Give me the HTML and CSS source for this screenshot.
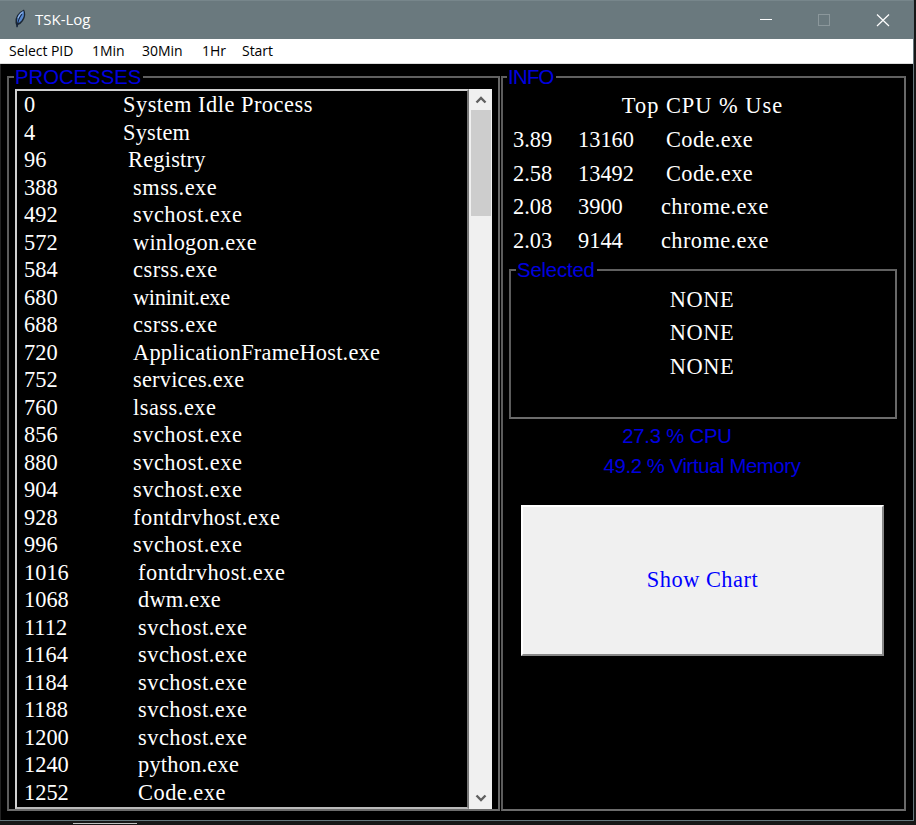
FILE: index.html
```html
<!DOCTYPE html>
<html lang="en">
<head>
<meta charset="utf-8">
<title>TSK-Log</title>
<link rel="stylesheet" href="styles.css">
</head>
<body>
<div class="window">
  <header class="titlebar">
    <svg class="feather" width="14" height="20" viewBox="0 0 14 20">
      <path d="M4 19 L2.500 14 Q1.500 5 11 .5 Q14 6 10 12 Q8 15 5 16 Z" fill="#1b2632"/>
      <path d="M4 13 Q3.500 5 10.500 1.800 Q12 7 8.500 11.500 Q6.500 14 4.500 14 Z" fill="#5687cf"/>
      <path d="M4 18 Q5 10 9 5" fill="none" stroke="#14243e" stroke-width="1.100"/>
      <path d="M5 9 Q6.500 5 9.800 3" fill="none" stroke="#a8c4ec" stroke-width="1"/>
    </svg>
    <h1 class="title">TSK-Log</h1>
    <svg class="controls" width="130" height="14" viewBox="0 0 130 14" fill="none">
      <path d="M0 6.500H12" stroke="#fff"/>
      <rect x="58.500" y="1.500" width="11" height="11" stroke="#8b979b"/>
      <path d="M117 1.500L129 13M129 1.500L117 13" stroke="#fff" stroke-width="1.200"/>
    </svg>
  </header>
  <nav class="menubar">
    <span class="m1">Select PID</span><span class="m2">1Min</span><span class="m3">30Min</span><span class="m4">1Hr</span><span>Start</span>
  </nav>
  <main class="content">
    <fieldset class="group processes">
      <legend>PROCESSES</legend>
      <div class="listbox">
        <ul class="list">
          <li><span>0</span><span>System Idle Process</span></li>
          <li class="snug"><span>4</span><span>System</span></li>
          <li class="n2 snug"><span>96</span><span>Registry</span></li>
          <li class="n3"><span>388</span><span>smss.exe</span></li>
          <li class="n3"><span>492</span><span>svchost.exe</span></li>
          <li class="n3 snug"><span>572</span><span>winlogon.exe</span></li>
          <li class="n3"><span>584</span><span>csrss.exe</span></li>
          <li class="n3 tight"><span>680</span><span>wininit.exe</span></li>
          <li class="n3"><span>688</span><span>csrss.exe</span></li>
          <li class="n3 snug"><span>720</span><span>ApplicationFrameHost.exe</span></li>
          <li class="n3 snug"><span>752</span><span>services.exe</span></li>
          <li class="n3"><span>760</span><span>lsass.exe</span></li>
          <li class="n3"><span>856</span><span>svchost.exe</span></li>
          <li class="n3"><span>880</span><span>svchost.exe</span></li>
          <li class="n3"><span>904</span><span>svchost.exe</span></li>
          <li class="n3"><span>928</span><span>fontdrvhost.exe</span></li>
          <li class="n3"><span>996</span><span>svchost.exe</span></li>
          <li class="n4"><span>1016</span><span>fontdrvhost.exe</span></li>
          <li class="n4 snug"><span>1068</span><span>dwm.exe</span></li>
          <li class="n4"><span>1112</span><span>svchost.exe</span></li>
          <li class="n4"><span>1164</span><span>svchost.exe</span></li>
          <li class="n4"><span>1184</span><span>svchost.exe</span></li>
          <li class="n4"><span>1188</span><span>svchost.exe</span></li>
          <li class="n4"><span>1200</span><span>svchost.exe</span></li>
          <li class="n4 snug"><span>1240</span><span>python.exe</span></li>
          <li class="n4"><span>1252</span><span>Code.exe</span></li>
        </ul>
        <div class="scrollbar">
          <svg class="arrow" width="12" height="21" viewBox="0 0 12 21"><path d="M1.500 13.500L6 9L10.500 13.500" fill="none" stroke="#606060" stroke-width="2.400"/></svg>
          <div class="thumb"></div>
          <svg class="arrow down" width="12" height="21" viewBox="0 0 12 21"><path d="M1.500 7.500L6 12L10.500 7.500" fill="none" stroke="#606060" stroke-width="2.400"/></svg>
        </div>
      </div>
    </fieldset>
    <fieldset class="group info">
      <legend>INFO</legend>
      <h2 class="heading">Top CPU % Use</h2>
      <div class="top"><span>3.89</span><span>13160</span><span class="wide">Code.exe</span></div>
      <div class="top"><span>2.58</span><span>13492</span><span class="wide">Code.exe</span></div>
      <div class="top"><span>2.08</span><span>3900</span><span>chrome.exe</span></div>
      <div class="top"><span>2.03</span><span>9144</span><span>chrome.exe</span></div>
      <fieldset class="group selected">
        <legend>Selected</legend>
        <p>NONE</p>
        <p>NONE</p>
        <p>NONE</p>
      </fieldset>
      <p class="stat cpu">27.3 % CPU</p>
      <p class="stat mem">49.2 % Virtual Memory</p>
      <button class="chart">Show Chart</button>
    </fieldset>
  </main>
</div>
<div class="edge"></div>
</body>
</html>
```
FILE: styles.css
```css
* { box-sizing: border-box; }
body {
  margin: 0;
  width: 916px;
  height: 825px;
  overflow: hidden;
  background: #171717;
}
.window {
  width: 914px;
  height: 821px;
  display: flex;
  flex-direction: column;
  background: #000;
  border-right: 1px solid #66777c;
  border-bottom: 1px solid #66777c;
}
.titlebar {
  height: 39px;
  flex: none;
  display: flex;
  align-items: center;
  padding: 0 23px 2px 13px;
  background: #6a797e;
  border-top: 1px solid #77868b;
}
.title {
  margin: 0 auto 0 8px;
  font: 15px "Open Sans", sans-serif;
  color: #fff;
}
.controls { margin-top: 2px; }
.menubar {
  height: 25px;
  flex: none;
  display: flex;
  padding-left: 9px;
  background: #fff;
  border-bottom: 1px solid #dcdcdc;
  font: 14px/24px "Open Sans", sans-serif;
  letter-spacing: -0.05px;
  color: #000;
  white-space: nowrap;
}
.m1 { width: 83px; }
.m2 { width: 50px; }
.m3 { width: 60px; }
.m4 { width: 40px; }
.content {
  flex: 1;
  display: flex;
  padding: 3px 7px 9px 6px;
  border-left: 1px solid #222;
  font: 22.4px/27.5px "Liberation Serif", serif;
  color: #fff;
}
.group {
  min-width: 0;
  margin: 0;
  padding: 0;
  border: 2px solid;
  border-color: #606060 #686868 #6c6c6c #5c5c5c;
}
.group > legend {
  height: 20px;
  margin-left: 5px;
  padding: 0 2px 0 1px;
  font: 20.3px/20px "Liberation Sans", sans-serif;
  color: #0000e0;
}
.processes { width: 493px; margin-right: 1px; }
.info { width: 405px; padding-left: 1px; }
.info > legend { margin-left: 3px; letter-spacing: -0.7px; }
.listbox {
  width: 477px;
  height: 720px;
  margin: 2px 0 0 6px;
  display: flex;
}
.list {
  width: 454px;
  margin: 0;
  padding: 0 0 0 7px;
  list-style: none;
  border: 2px solid;
  border-color: #d0d0d0 #777 #bababa #d0d0d0;
  overflow: hidden;
}
.list li {
  display: flex;
  height: 27.5px;
  line-height: 27px;
  white-space: pre;
}
.list li span:first-child { width: 99px; letter-spacing: 0; }
.list .n2 span:first-child { width: 104px; }
.list .n3 span:first-child { width: 109px; }
.list .n4 span:first-child { width: 114px; }
.list span:last-child { letter-spacing: 0.5px; }
.list .snug span:last-child { letter-spacing: 0.22px; }
.list .tight span:last-child { letter-spacing: -0.3px; }
.scrollbar {
  width: 23px;
  display: flex;
  flex-direction: column;
  padding: 0 1px 0 2px;
  background: #f0f0f0;
}
.arrow { align-self: center; flex: none; }
.thumb { height: 106px; background: #cdcdcd; }
.down { margin-top: auto; }
.heading {
  margin: 2px 0 0;
  height: 34px;
  padding-right: 3px;
  font: inherit;
  line-height: 33px;
  letter-spacing: 1px;
  text-align: center;
}
.top {
  display: flex;
  height: 33.7px;
  padding-left: 9px;
  line-height: 33.7px;
}
.top span:first-child { width: 65px; }
.top span:nth-child(2) { width: 83px; }
.top span:last-child { letter-spacing: 0.4px; }
.top .wide { padding-left: 5px; }
.selected {
  width: 388px;
  height: 159px;
  margin: 2px 0 0 5px;
}
.selected > legend { letter-spacing: -0.15px; }
.selected p {
  margin: 0;
  height: 33.7px;
  padding-right: 2px;
  line-height: 33.7px;
  letter-spacing: 0.6px;
  text-align: center;
}
.selected legend + p { margin-top: 3px; }
.stat {
  margin: 0;
  height: 30px;
  padding-right: 4px;
  font: 20.3px/30px "Liberation Sans", sans-serif;
  letter-spacing: -0.38px;
  color: #0000e0;
  text-align: center;
}
.cpu { margin-top: 2px; padding-right: 54px; letter-spacing: -0.2px; }
.chart {
  display: block;
  width: 363px;
  height: 151px;
  margin: 24px 0 0 17px;
  padding: 0;
  font: 22.4px "Liberation Serif", serif;
  letter-spacing: 0.5px;
  color: #00f;
  background: #f0f0f0;
  border: 2px solid;
  border-color: #fff #888 #888 #fff;
}
.edge {
  width: 64px;
  height: 1px;
  margin: 2px 0 0 73px;
  background: #c0c0c0;
}
```
